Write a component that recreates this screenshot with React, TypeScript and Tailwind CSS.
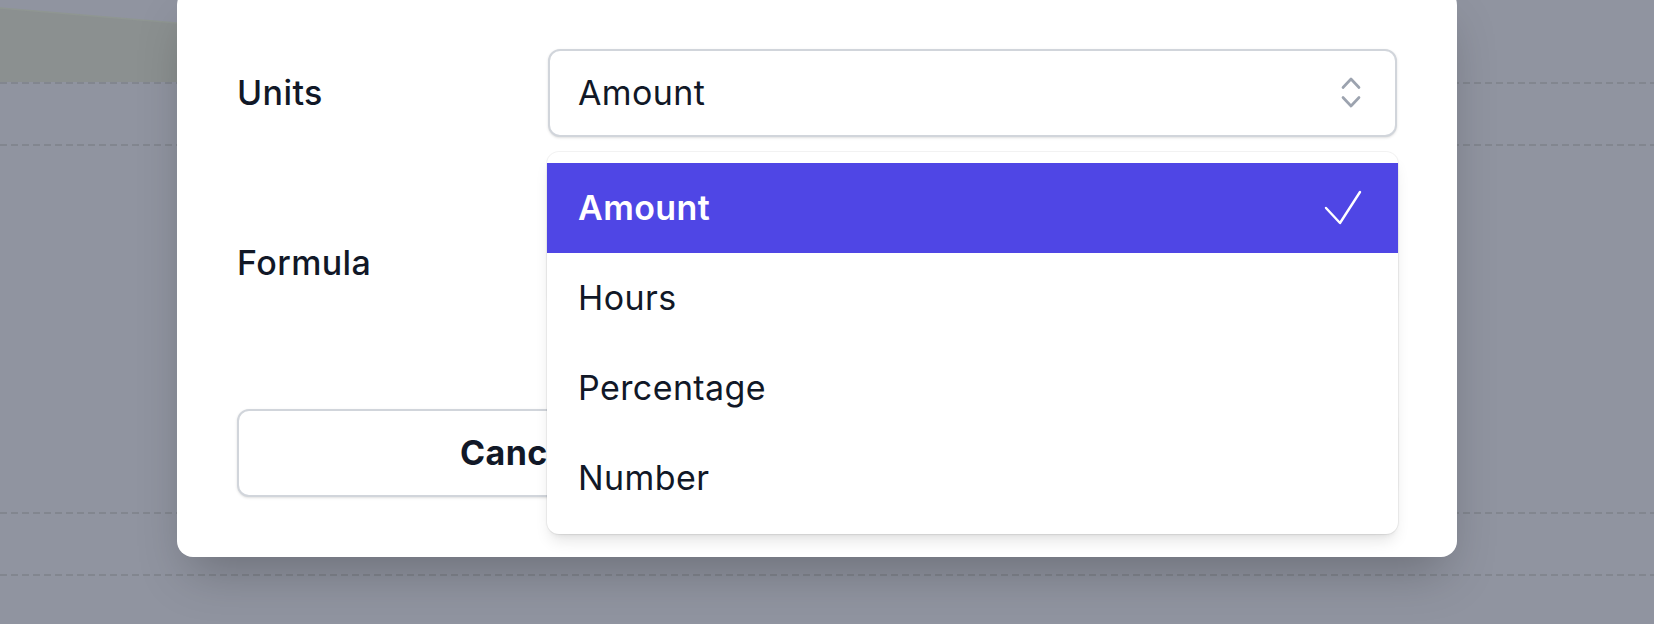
import React from 'react'

const units = ['Amount', 'Hours', 'Percentage', 'Number']

function SelectorIcon() {
  return (
    <svg width="22" height="34" viewBox="0 0 22 34" fill="none" stroke="#9ca3af" strokeWidth="2.7" strokeLinecap="round" strokeLinejoin="round">
      <path d="M3 11.5 L11 3 L19 11.5" />
      <path d="M3 21.5 L11 30 L19 21.5" />
    </svg>
  )
}

function CheckIcon() {
  return (
    <svg width="38" height="36" viewBox="0 0 38 36" fill="none" stroke="#ffffff" strokeWidth="2.4" strokeLinecap="round" strokeLinejoin="round">
      <path d="M2 18 L16 33 L36 2" />
    </svg>
  )
}

function DashedLine() {
  return (
    <div className="h-[2px] w-full bg-[repeating-linear-gradient(90deg,#82868f_0px,#82868f_7px,transparent_7px,transparent_11px)]" />
  )
}

function UnitsSelect() {
  const selected = 'Amount'
  return (
    <div className="relative flex-1">
      <button className="flex h-[88px] w-full items-center justify-between rounded-xl border-2 border-[#d1d5db] bg-white pl-[28px] pr-[33px] shadow-sm">
        <span className="text-[34px] leading-none tracking-[0.012em] text-[#111827]">{selected}</span>
        <SelectorIcon />
      </button>
      <ul className="absolute -left-px -right-px top-[103px] z-10 rounded-xl bg-white py-[11px] shadow-lg ring-1 ring-black/5">
        {units.map((u) => {
          const active = u === selected
          return (
            <li
              key={u}
              className={
                active
                  ? 'flex h-[90px] items-center justify-between bg-[#4f46e5] pl-[31px] pr-[36px] text-[34px] font-semibold leading-none tracking-[0.012em] text-white'
                  : 'flex h-[90px] items-center justify-between pl-[31px] pr-[36px] text-[34px] leading-none tracking-[0.012em] text-[#111827]'
              }
            >
              <span>{u}</span>
              {active && <CheckIcon />}
            </li>
          )
        })}
      </ul>
    </div>
  )
}

export default function App() {
  return (
    <div className="relative h-[624px] w-full overflow-hidden bg-[#9094a0] font-['Inter',sans-serif]">
      {/* page behind the dialog */}
      <div className="flex flex-col">
        <div className="h-[82px]">
          <svg width="600" height="82" viewBox="0 0 600 82">
            <polygon points="0,8 600,59 600,82 0,82" fill="#8b9090" />
            <line x1="0" y1="8" x2="600" y2="59" stroke="#8f9692" strokeWidth="1.5" />
          </svg>
        </div>
        <DashedLine />
        <div className="h-[60px]" />
        <DashedLine />
        <div className="h-[366px]" />
        <DashedLine />
        <div className="h-[60px]" />
        <DashedLine />
      </div>

      {/* dialog */}
      <div className="absolute inset-0 pl-[177px]">
        <div className="-mt-[11px] w-[1280px] rounded-2xl bg-white px-[60px] pb-[60px] pt-[60px] shadow-2xl">
          <div className="flex h-[88px] items-center">
            <label className="w-[311px] text-[34px] font-medium leading-none tracking-[0.012em] text-[#111827]">Units</label>
            <UnitsSelect />
          </div>

          <div className="mt-[82px] flex h-[88px] items-center">
            <label className="w-[311px] text-[34px] font-medium leading-none tracking-[0.012em] text-[#111827]">Formula</label>
            <div className="h-[88px] flex-1 rounded-xl border-2 border-[#d1d5db] bg-white shadow-sm" />
          </div>

          <div className="mt-[102px] grid h-[88px] grid-cols-2 gap-8">
            <button className="rounded-xl border-2 border-[#d1d5db] bg-white text-[34px] font-bold leading-none tracking-[0.012em] text-[#111827] shadow-sm">
              Cancel
            </button>
            <button className="rounded-xl bg-[#4f46e5] text-[34px] font-bold leading-none text-white shadow-sm">
              Save
            </button>
          </div>
        </div>
      </div>
    </div>
  )
}
